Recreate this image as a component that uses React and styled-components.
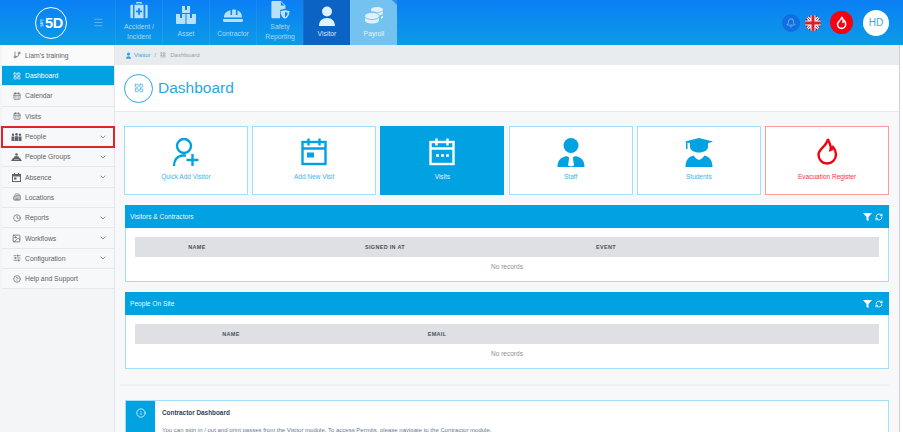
import React from 'react'
import styled, { createGlobalStyle } from 'styled-components'
import {
  Bell, Menu, ChevronDown, GitBranch, LayoutGrid, CalendarDays, Building2, Clock, Image,
  SlidersHorizontal, HelpCircle, Info, RefreshCw,
} from 'lucide-react'

const GlobalStyle = createGlobalStyle`
  html, body { margin: 0; padding: 0; height: 100%; overflow: hidden; }
  body { font-family: "Liberation Sans", Arial, sans-serif; background: #fff; }
  * { box-sizing: border-box; }
`

const Page = styled.div`
  width: 903px;
  height: 432px;
  overflow: hidden;
  display: flex;
  flex-direction: column;
`

const Header = styled.header`
  height: 45px;
  flex: none;
  display: flex;
  align-items: stretch;
  background: linear-gradient(180deg, #0a7ff5 0%, #0c9be6 100%);
`

const LogoArea = styled.div`
  width: 115px;
  flex: none;
  display: flex;
  align-items: center;
  padding-left: 35px;
  gap: 26px;
  color: #7cc4f0;
`

const LogoRing = styled.div`
  width: 32px;
  height: 32px;
  flex: none;
  border-radius: 50%;
  border: 1.5px solid #fff;
  color: #fff;
  font-weight: 700;
  font-size: 14.5px;
  display: flex;
  align-items: center;
  justify-content: center;
  letter-spacing: -0.3px;
  gap: 1px;
  padding-left: 1px;

  small {
    font-size: 3px;
    font-weight: 400;
    letter-spacing: 0;
    writing-mode: vertical-rl;
    transform: rotate(180deg);
  }
`

const Tile = styled.div`
  width: 47px;
  display: flex;
  flex-direction: column;
  align-items: center;
  padding-top: ${p => (p.$two ? '1px' : '5px')};
  border-left: 1px solid rgba(255, 255, 255, 0.07);
  font-size: 6.8px;
  line-height: 10px;
  text-align: center;
  position: relative;
  color: ${p => (p.$active ? '#d6e6f7' : p.$light ? '#e4f3fc' : '#a9d8f5')};
  background: ${p => (p.$active ? '#0b63c4' : p.$light ? '#74c2ef' : 'transparent')};

  ${p => p.$light && `
    &::after {
      content: '';
      position: absolute;
      top: 0;
      right: 0;
      border-top: 5px solid #2d8fe8;
      border-left: 5px solid transparent;
    }
  `}
`

const TileIcon = styled.svg`
  width: 22px;
  height: ${p => (p.$two ? '20px' : '22px')};
  flex: none;
  margin-bottom: ${p => (p.$two ? '1px' : '2px')};
  fill: ${p => (p.$bright ? '#dff1fc' : '#b9e0f8')};
`

const HeaderRight = styled.div`
  margin-left: auto;
  display: flex;
  align-items: center;
  padding-right: 14px;
`

const BellBubble = styled.div`
  width: 18px;
  height: 18px;
  border-radius: 50%;
  background: #0f6fe0;
  color: #9fd0f7;
  display: flex;
  align-items: center;
  justify-content: center;
  margin-right: 5px;
`

const Flag = styled.svg`
  width: 16px;
  height: 16px;
  border-radius: 50%;
  margin-right: 9px;
`

const FireBubble = styled.div`
  width: 23px;
  height: 23px;
  border-radius: 50%;
  background: #f7000f;
  color: #fff;
  display: flex;
  align-items: center;
  justify-content: center;
  margin-right: 10px;
`

const Avatar = styled.div`
  width: 26px;
  height: 26px;
  border-radius: 50%;
  background: #fff;
  color: #3aa6e6;
  font-size: 10px;
  display: flex;
  align-items: center;
  justify-content: center;
`

const Body = styled.div`
  flex: 1;
  display: flex;
  min-height: 0;
`

const Sidebar = styled.aside`
  width: 115px;
  flex: none;
  padding-left: 2px;
  background: #f4f5f7;
  border-right: 1px solid #e3e5e8;
`

const SideRow = styled.div`
  height: ${p => p.$h || 20.3}px;
  display: flex;
  align-items: center;
  padding-left: 9px;
  padding-right: 7px;
  gap: 3px;
  font-size: 6.8px;
  background: ${p => (p.$active ? '#00a2e2' : p.$plain ? '#fafafa' : '#f7f8f9')};
  color: ${p => (p.$active ? '#fff' : '#5f6368')};
  border-bottom: 1px solid #e6e8ea;
  position: relative;

  ${p => p.$marked && `
    outline: 2px solid #e2222c;
    outline-offset: -1px;
    z-index: 1;
  `}
`

const SideIcon = styled.div`
  width: 11px;
  flex: none;
  display: flex;
  justify-content: center;
`

const SideLabel = styled.div`
  flex: 1;
`

const Main = styled.main`
  flex: 1;
  min-width: 0;
  display: flex;
  flex-direction: column;
  background: #f7f8fa;
  margin-right: 3px;
  border-right: 1px solid #cfd1d4;
`

const Crumbs = styled.div`
  height: 20px;
  flex: none;
  background: #e9ecef;
  display: flex;
  align-items: center;
  padding-left: 10px;
  font-size: 6px;
  color: #9aa0a6;
  gap: 4px;

  b { font-weight: 400; color: #2ea3dc; margin-left: -2px; }
`

const TitleBar = styled.div`
  height: 47px;
  flex: none;
  background: #fff;
  border-bottom: 1px solid #e6e8ea;
  display: flex;
  align-items: center;
  padding-left: 9px;
  gap: 5px;
  color: #2aa7e0;
  font-size: 15.5px;
`

const TitleRing = styled.div`
  width: 29px;
  height: 29px;
  border-radius: 50%;
  border: 1px solid #2aa7e0;
  display: flex;
  align-items: center;
  justify-content: center;
`

const Cards = styled.div`
  display: flex;
  gap: 4.3px;
  padding: 14px 10px 0 9px;
`

const Card = styled.div`
  flex: 1;
  height: 69px;
  background: ${p => (p.$on ? '#00a2e2' : '#fff')};
  border: 1px solid ${p => (p.$on ? '#00a2e2' : p.$red ? '#ff9a9e' : '#a3dff8')};
  color: ${p => (p.$on ? '#fff' : p.$red ? '#f5000c' : '#00a2e2')};
  display: flex;
  flex-direction: column;
  align-items: center;
  padding-top: 10px;
  font-size: 6.5px;
`

const CardLabel = styled.div`
  margin-top: 6px;
  line-height: 8px;
  color: ${p => (p.$on ? '#e4f5fd' : p.$red ? '#f7343d' : '#3fb1e6')};
`

const CardIcon = styled.svg`
  width: 28px;
  height: 30px;
  flex: none;
  fill: currentColor;
`

const OutlineIcon = styled(CardIcon)`
  fill: none;
  stroke: currentColor;
  stroke-width: 2.4;
`

const Panel = styled.section`
  margin: 10px 10px 0;
  border: 1px solid #a3dff8;
  background: #fff;
  flex: none;
`

const PanelHead = styled.div`
  height: 23px;
  background: #00a2e2;
  color: #e9f7fe;
  font-size: 6.6px;
  display: flex;
  align-items: center;
  padding: 0 6px 0 5px;
  margin: -1px -1px 0;

  span { flex: 1; }
`

const PanelBody = styled.div`
  height: 53px;
  padding: 9px 9px 0;
`

const TableHead = styled.div`
  height: 20px;
  background: #dee0e4;
  display: grid;
  grid-template-columns: ${p => p.$cols};
  align-items: center;
  font-size: 5.5px;
  font-weight: 700;
  letter-spacing: 0.3px;
  color: #4b5259;
  text-align: center;
`

const Empty = styled.div`
  height: 19px;
  display: flex;
  align-items: center;
  justify-content: center;
  font-size: 6.5px;
  color: #8b9197;
`

const Rule = styled.div`
  height: 2px;
  flex: none;
  background: #f0f1f3;
  margin: 15px 10px 14px 5px;
`

const Notice = styled.div`
  margin: 0 10px;
  flex: none;
  height: 80px;
  display: flex;
  background: #fff;
  border: 1px solid #a3dff8;
`

const NoticeIcon = styled.div`
  width: 29px;
  flex: none;
  background: #00a2e2;
  color: #e9f7fe;
  display: flex;
  justify-content: center;
  padding-top: 7px;
`

const NoticeText = styled.div`
  padding: 8px 0 0 7px;

  h4 { margin: 0 0 9px; font-size: 6.4px; font-weight: 700; line-height: 8px; color: #2f3f56; }
  p { margin: 0; line-height: 8px; font-size: 6px; color: #6a7a8f; }
`

const tiles = [
  { label: <>Accident /<br />Incident</>, two: true, icon: 'aid' },
  { label: 'Asset', icon: 'boxes' },
  { label: 'Contractor', icon: 'hat' },
  { label: <>Safety<br />Reporting</>, two: true, icon: 'doc' },
  { label: 'Visitor', icon: 'person', active: true },
  { label: 'Payroll', icon: 'coins', light: true },
]

const tileShapes = {
  aid: <path d="M8 3V1h6v2h-1.500V2.500h-3V3zM3 4h1.500v15H3a1.500 1.500 0 0 1-1.500-1.500v-12A1.500 1.500 0 0 1 3 4zm3 0h10v15H6zm12 0h1a1.500 1.500 0 0 1 1.500 1.500v12A1.500 1.500 0 0 1 19 19h-1zM10 8v2.500H7.600v2H10V15h2v-2.500h2.400v-2H12V8z" fillRule="evenodd" />,
  boxes: <path d="M7 1h3v4h2V1h3v7H7zM1 9h4v4h2V9h3.500v9a1 1 0 0 1-1 1H2a1 1 0 0 1-1-1zm10.500 0H15v4h2V9h4v9a1 1 0 0 1-1 1h-8.500z" />,
  hat: <path d="M8.500 5.200V10h1.600V4.800c.6-.1 1.200-.2 1.900-.2s1.300.1 1.900.2V10h1.600V5.200C18.500 6.400 20 9 20 12.500H2c0-3.500 1.500-6.100 6.500-7.300zM1 14h20v1.500c0 .8-.7 1.500-1.500 1.500h-17C1.700 17 1 16.300 1 15.500z" />,
  doc: <path d="M3 0h9l5 5v3.500c-3 .3-5 1-6 1.800V19H3a1.500 1.500 0 0 1-1.500-1.500v-16A1.500 1.500 0 0 1 3 0zm9 1v4h4zM16.500 10c1.500.6 3.300 1 5 1 0 4.500-1.800 7.300-5 8.500-3.200-1.200-5-4-5-8.500 1.700 0 3.500-.4 5-1zm0 2.200v5.500c1.700-.9 2.700-2.500 2.900-4.800-1-.1-2-.4-2.900-.7z" fillRule="evenodd" />,
  person: <path d="M11 1.500a5 5 0 1 1 0 10 5 5 0 0 1 0-10zM3 21c0-5 3-8 8-8s8 3 8 8z" />,
  coins: <path d="M9 8c3.900 0 7 1.300 7 3s-3.100 3-7 3-7-1.300-7-3 3.100-3 7-3zm-7 5c1.500 1.200 4.100 2 7 2s5.500-.8 7-2v2.500c0 1.700-3.100 3-7 3s-7-1.300-7-3zM14 2c3.400 0 6 1 6 2.500S17.400 7 14 7 8 6 8 4.500 10.600 2 14 2zm-6 4c1.200 1 3.400 1.800 6 1.800s4.800-.8 6-1.800v2c0 1.200-1.700 2.200-3.300 2.400C15.800 8.500 12 7.300 8 7.100zm10 5.500c1-.4 2-.8 2-1.300v2c0 .8-.9 1.500-2 1.900z" />,
}

const flamePath = 'M15 2c.8 4.500 4 6 2.500 11 1.300-.3 2.200-1.300 2.700-2.800 2 2.300 2.800 5 2.800 7.300 0 5-4 9-9 9s-8.500-4-8.500-9C5.500 12 13.500 9.500 15 2z'

function PeopleGlyph() {
  return (
    <svg width="11" height="8" viewBox="0 0 11 8" fill="currentColor">
      <circle cx="2" cy="1.700" r="1.200" />
      <circle cx="5.500" cy="1.400" r="1.300" />
      <circle cx="9" cy="1.700" r="1.200" />
      <path d="M.5 3.500h3v4.500h-3zM4 3.200h3V8H4zM7.500 3.500h3v4.500h-3z" />
    </svg>
  )
}

function GroupGlyph() {
  return (
    <svg width="11" height="8" viewBox="0 0 11 8" fill="currentColor">
      <circle cx="5.500" cy="1.500" r="1.300" />
      <path d="M3.500 3.200h4L9 6H2zM0 8l2-3 1.500 1.500h4L9 5l2 3z" />
    </svg>
  )
}

function CalendarSolidGlyph() {
  return (
    <svg width="9" height="9" viewBox="0 0 9 9" fill="currentColor">
      <path d="M2 0h1v1h3V0h1v1h2v8H0V1h2zM1 3.500V8h7V3.500z" fillRule="evenodd" />
      <rect x="2" y="4.500" width="2.500" height="2" />
    </svg>
  )
}

const sideItems = [
  { label: 'Calendar', icon: <CalendarDays size={8} strokeWidth={2} /> },
  { label: 'Visits', icon: <CalendarDays size={8} strokeWidth={2} /> },
  { label: 'People', icon: <PeopleGlyph />, more: true, marked: true },
  { label: 'People Groups', icon: <GroupGlyph />, more: true },
  { label: 'Absence', icon: <CalendarSolidGlyph />, more: true },
  { label: 'Locations', icon: <Building2 size={8} strokeWidth={2} /> },
  { label: 'Reports', icon: <Clock size={8} strokeWidth={2} />, more: true },
  { label: 'Workflows', icon: <Image size={9} strokeWidth={2} />, more: true },
  { label: 'Configuration', icon: <SlidersHorizontal size={8} strokeWidth={2} />, more: true },
  { label: 'Help and Support', icon: <HelpCircle size={8} strokeWidth={2} /> },
]

function CalendarGlyph({ dots }) {
  return (
    <OutlineIcon viewBox="0 0 28 30">
      <rect x="2.500" y="5" width="23" height="22" />
      <path d="M2.500 11.500h23M8.500 1.500v7M19.500 1.500v7" />
      {dots
        ? <path d="M8 18.500h3M13 18.500h3M18 18.500h3" />
        : <rect x="7" y="15.500" width="7" height="5" fill="currentColor" stroke="none" />}
    </OutlineIcon>
  )
}

function VisitorPlusGlyph() {
  return (
    <OutlineIcon viewBox="0 0 28 30">
      <circle cx="12" cy="9" r="7" />
      <path d="M2 29c0-6 3-9.500 8-10.500h4" />
      <path d="M14.500 23h12M20.500 17v12" />
    </OutlineIcon>
  )
}

function PanelBlock({ title, cols, heads }) {
  return (
    <Panel>
      <PanelHead>
        <span>{title}</span>
        <svg width="9" height="8" viewBox="0 0 9 8" fill="#fff"><path d="M0 0h9L5.500 4v4l-2-1V4z" /></svg>
        <RefreshCw size={8} strokeWidth={2.6} color="#fff" style={{ marginLeft: 3 }} />
      </PanelHead>
      <PanelBody>
        <TableHead $cols={cols}>
          {heads.map(h => <div key={h}>{h}</div>)}
        </TableHead>
        <Empty>No records</Empty>
      </PanelBody>
    </Panel>
  )
}

export default function App() {
  return (
    <Page>
      <GlobalStyle />
      <Header>
        <LogoArea>
          <LogoRing><small>SAFE</small>5D</LogoRing>
          <Menu size={11} strokeWidth={1.5} />
        </LogoArea>
        {tiles.map(t => (
          <Tile key={t.icon} $two={t.two} $active={t.active} $light={t.light}>
            <TileIcon $two={t.two} $bright={t.active || t.light} viewBox="0 0 22 22">
              {tileShapes[t.icon]}
            </TileIcon>
            <div>{t.label}</div>
          </Tile>
        ))}
        <HeaderRight>
          <BellBubble><Bell size={10} strokeWidth={1.6} /></BellBubble>
          <Flag viewBox="0 0 16 16">
            <rect width="16" height="16" fill="#2b3f78" />
            <path d="M0 0l16 16M16 0L0 16" stroke="#fff" strokeWidth="3" />
            <path d="M0 0l16 16M16 0L0 16" stroke="#d8202f" strokeWidth="1" />
            <path d="M8 0v16M0 8h16" stroke="#fff" strokeWidth="5" />
            <path d="M8 0v16M0 8h16" stroke="#d8202f" strokeWidth="3" />
          </Flag>
          <FireBubble>
            <svg width="13" height="14" viewBox="0 0 28 30" fill="none" stroke="currentColor" strokeWidth="3.400">
              <path d={flamePath} />
            </svg>
          </FireBubble>
          <Avatar>HD</Avatar>
        </HeaderRight>
      </Header>
      <Body>
        <Sidebar>
          <SideRow $plain $h={21}>
            <SideIcon><GitBranch size={8} strokeWidth={2} /></SideIcon>
            <SideLabel>Liam's training</SideLabel>
          </SideRow>
          <SideRow $active>
            <SideIcon><LayoutGrid size={8} strokeWidth={2} /></SideIcon>
            <SideLabel>Dashboard</SideLabel>
          </SideRow>
          {sideItems.map(({ label, icon, more, marked }) => (
            <SideRow key={label} $marked={marked}>
              <SideIcon>{icon}</SideIcon>
              <SideLabel>{label}</SideLabel>
              {more && <ChevronDown size={8} strokeWidth={2} />}
            </SideRow>
          ))}
        </Sidebar>
        <Main>
          <Crumbs>
            <svg width="7" height="7" viewBox="0 0 22 22" fill="#2ea3dc">{tileShapes.person}</svg>
            <b>Visitor</b> <span>/</span>
            <LayoutGrid size={6} />
            <span>Dashboard</span>
          </Crumbs>
          <TitleBar>
            <TitleRing><LayoutGrid size={10} strokeWidth={1.6} /></TitleRing>
            Dashboard
          </TitleBar>
          <Cards>
            <Card>
              <VisitorPlusGlyph />
              <CardLabel>Quick Add Visitor</CardLabel>
            </Card>
            <Card>
              <CalendarGlyph />
              <CardLabel>Add New Visit</CardLabel>
            </Card>
            <Card $on>
              <CalendarGlyph dots />
              <CardLabel $on>Visits</CardLabel>
            </Card>
            <Card>
              <CardIcon viewBox="0 0 28 30">
                <circle cx="14" cy="8.500" r="7.500" />
                <path d="M0.500 30c0-6 2.500-9.500 9-11l2.700 1.500-1.200 8 3 1 3-1-1.200-8 2.700-1.500c6.500 1.500 9 5 9 11z" />
              </CardIcon>
              <CardLabel>Staff</CardLabel>
            </Card>
            <Card>
              <CardIcon viewBox="0 0 28 30">
                <path d="M0 4.500L14 1l14 3.500-5 1.800V10c0 3-4 5.500-9 5.500S5 13 5 10V6.300L2.500 5.500V12H1V5z" />
                <path d="M0.500 30c0-6 2.500-10 8-11.500 1.500 2 3.200 3.500 5.500 4.500 2.300-1 4-2.500 5.500-4.500 5.500 1.500 8 5.500 8 11.500z" />
              </CardIcon>
              <CardLabel>Students</CardLabel>
            </Card>
            <Card $red>
              <OutlineIcon viewBox="0 0 28 30"><path d={flamePath} /></OutlineIcon>
              <CardLabel $red>Evacuation Register</CardLabel>
            </Card>
          </Cards>
          <PanelBlock
            title="Visitors & Contractors"
            cols="124px 252px 190px 1fr"
            heads={['NAME', 'SIGNED IN AT', 'EVENT', '']}
          />
          <PanelBlock
            title="People On Site"
            cols="192px 220px 1fr"
            heads={['NAME', 'EMAIL', '']}
          />
          <Rule />
          <Notice>
            <NoticeIcon><Info size={10} strokeWidth={2} /></NoticeIcon>
            <NoticeText>
              <h4>Contractor Dashboard</h4>
              <p>You can sign in / out and print passes from the Visitor module. To access Permits, please navigate to the Contractor module.</p>
            </NoticeText>
          </Notice>
        </Main>
      </Body>
    </Page>
  )
}
